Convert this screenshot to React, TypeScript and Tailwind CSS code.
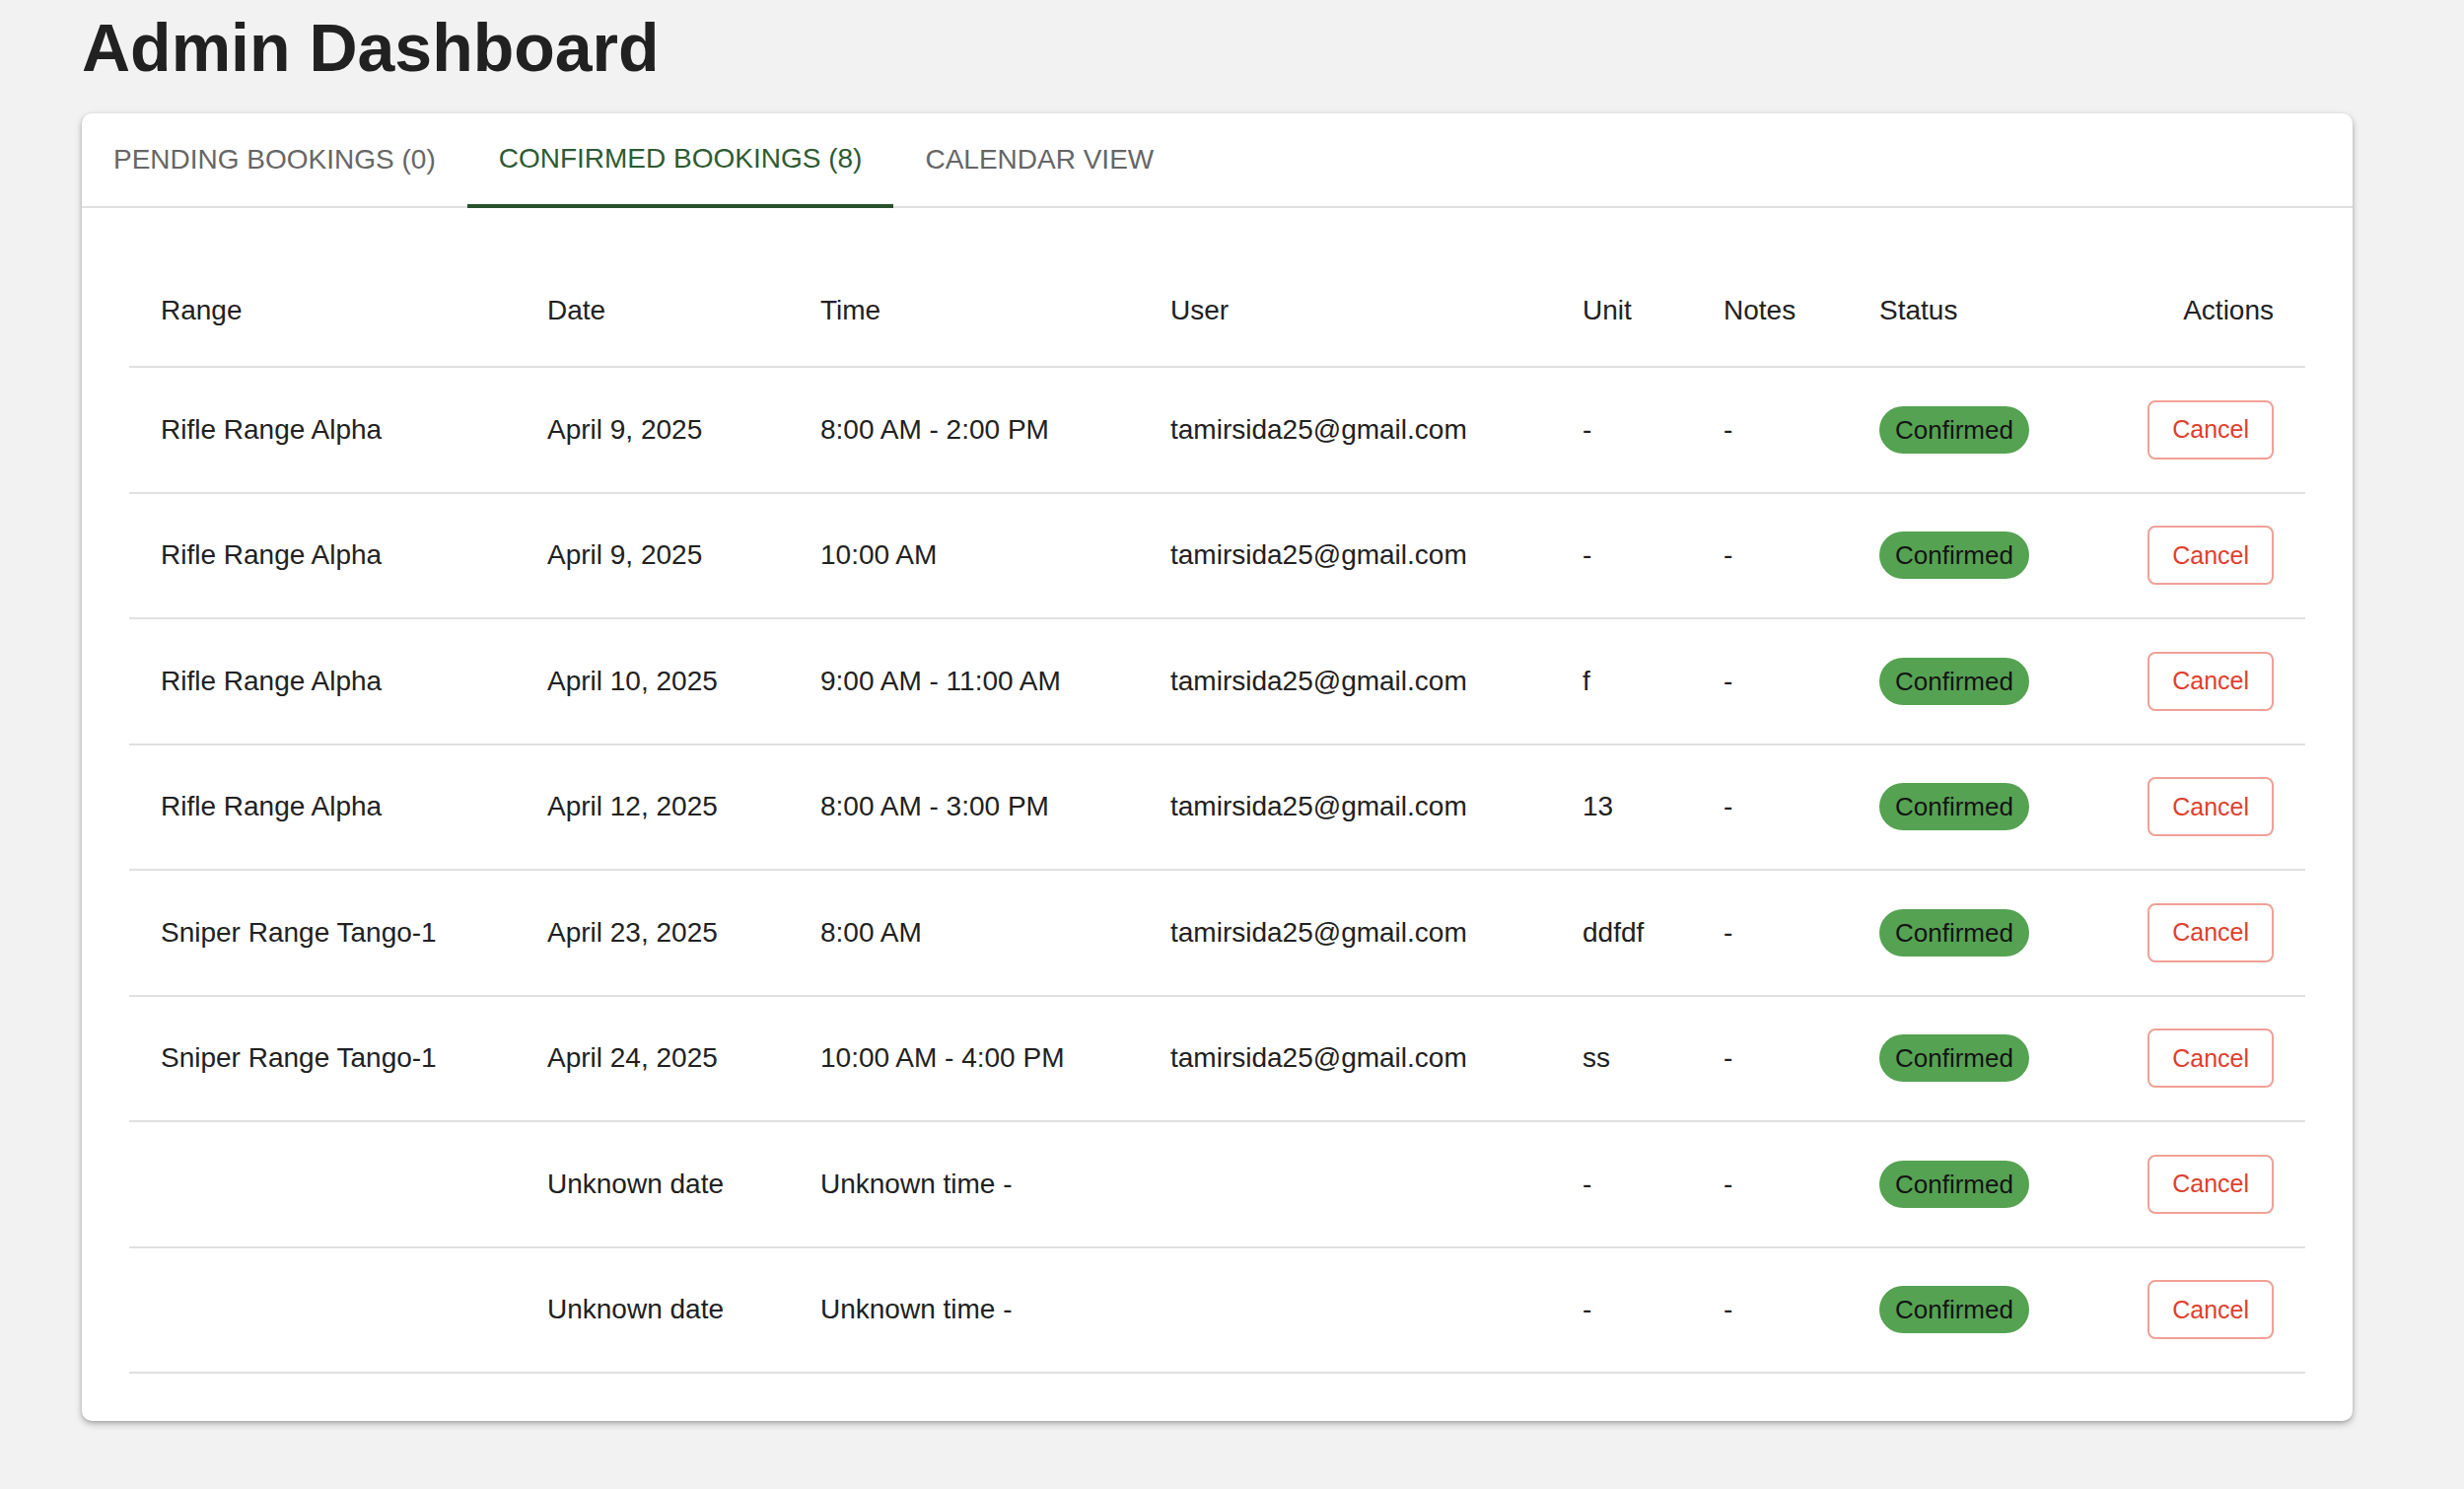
import React from 'react'

type Booking = {
    range: string
    date: string
    time: string
    user: string
    unit: string
    notes: string
}

const bookings: Booking[] = [
    { range: 'Rifle Range Alpha', date: 'April 9, 2025', time: '8:00 AM - 2:00 PM', user: 'tamirsida25@gmail.com', unit: '-', notes: '-' },
    { range: 'Rifle Range Alpha', date: 'April 9, 2025', time: '10:00 AM', user: 'tamirsida25@gmail.com', unit: '-', notes: '-' },
    { range: 'Rifle Range Alpha', date: 'April 10, 2025', time: '9:00 AM - 11:00 AM', user: 'tamirsida25@gmail.com', unit: 'f', notes: '-' },
    { range: 'Rifle Range Alpha', date: 'April 12, 2025', time: '8:00 AM - 3:00 PM', user: 'tamirsida25@gmail.com', unit: '13', notes: '-' },
    { range: 'Sniper Range Tango-1', date: 'April 23, 2025', time: '8:00 AM', user: 'tamirsida25@gmail.com', unit: 'ddfdf', notes: '-' },
    { range: 'Sniper Range Tango-1', date: 'April 24, 2025', time: '10:00 AM - 4:00 PM', user: 'tamirsida25@gmail.com', unit: 'ss', notes: '-' },
    { range: '', date: 'Unknown date', time: 'Unknown time -', user: '', unit: '-', notes: '-' },
    { range: '', date: 'Unknown date', time: 'Unknown time -', user: '', unit: '-', notes: '-' },
]

const tabs = [
    { label: 'PENDING BOOKINGS (0)', active: false },
    { label: 'CONFIRMED BOOKINGS (8)', active: true },
    { label: 'CALENDAR VIEW', active: false },
]

const headers = ['Range', 'Date', 'Time', 'User', 'Unit', 'Notes', 'Status']
const widths = [
    'w-[392px]',
    'w-[277px]',
    'w-[355px]',
    'w-[418px]',
    'w-[143px]',
    'w-[158px]',
    'w-[260px]',
]

const App = () => {
    return (
        <div className="min-h-screen bg-[#f2f2f2] px-[83px] pt-[4px] pb-[60px] font-['Liberation_Sans',Arial,sans-serif] text-[#212121]">
            <h1 className="text-[68px] font-bold leading-[88px] mb-[23px]">
                Admin Dashboard
            </h1>
            <div className="w-[2303px] bg-white rounded-[10px] shadow-[0_3px_7px_rgba(0,0,0,0.28),0_1px_3px_rgba(0,0,0,0.12)]">
                <div className="flex h-[96px] border-b-2 border-[#e0e0e0]">
                    {tabs.map((tab) => (
                        <div
                            key={tab.label}
                            className={
                                tab.active
                                    ? 'flex items-center px-[32px] text-[28px] text-[#2e5a33] border-b-4 border-[#27522c] -mb-[2px]'
                                    : 'flex items-center px-[32px] text-[28px] text-[#666666]'
                            }
                        >
                            {tab.label}
                        </div>
                    ))}
                </div>
                <div className="p-[48px]">
                    <table className="w-full table-fixed border-collapse text-[28px]">
                        <thead>
                            <tr className="border-b-2 border-[#e0e0e0]">
                                {headers.map((h, i) => (
                                    <th
                                        key={h}
                                        className={
                                            widths[i] +
                                            ' px-[32px] h-[113px] text-left font-normal leading-[40px]'
                                        }
                                    >
                                        {h}
                                    </th>
                                ))}
                                <th className="px-[32px] text-right font-normal leading-[40px]">
                                    Actions
                                </th>
                            </tr>
                        </thead>
                        <tbody>
                            {bookings.map((b, index) => (
                                <tr
                                    key={index}
                                    className="border-b-2 border-[#e0e0e0]"
                                >
                                    <td className="px-[32px] h-[127.5px] leading-[40px]">
                                        {b.range}
                                    </td>
                                    <td className="px-[32px] leading-[40px]">
                                        {b.date}
                                    </td>
                                    <td className="px-[32px] leading-[40px]">
                                        {b.time}
                                    </td>
                                    <td className="px-[32px] leading-[40px]">
                                        {b.user}
                                    </td>
                                    <td className="px-[32px] leading-[40px]">
                                        {b.unit}
                                    </td>
                                    <td className="px-[32px] leading-[40px]">
                                        {b.notes}
                                    </td>
                                    <td className="px-[32px] leading-[40px]">
                                        <span className="inline-flex items-center h-[48px] px-[16px] rounded-full bg-[#55a252] text-[26px] text-[#141414]">
                                            Confirmed
                                        </span>
                                    </td>
                                    <td className="px-[32px] text-right">
                                        <button className="inline-flex items-center justify-center h-[60px] px-[23px] rounded-[8px] border-2 border-[#f1a096] text-[25px] text-[#e0402e]">
                                            Cancel
                                        </button>
                                    </td>
                                </tr>
                            ))}
                        </tbody>
                    </table>
                </div>
            </div>
        </div>
    )
}

export default App
